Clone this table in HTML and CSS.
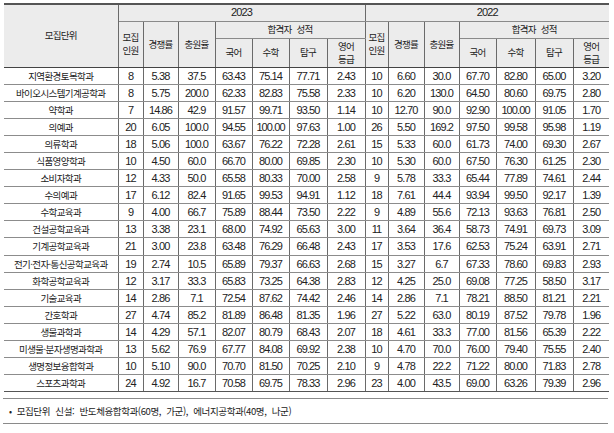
FILE: index.html
```html
<!DOCTYPE html>
<html lang="ko">
<head>
<meta charset="utf-8">
<title>모집단위별 입시결과</title>
<link rel="stylesheet" href="styles.css">
</head>
<body>
<table class="result">
  <colgroup>
    <col class="c-unit">
    <col class="c-n"><col class="c-rate"><col class="c-fill"><col class="c-s1"><col class="c-s2"><col class="c-s3"><col class="c-s4">
    <col class="c-n2"><col class="c-rate2"><col class="c-fill2"><col class="c-t1"><col class="c-t2"><col class="c-t3"><col class="c-t4">
  </colgroup>
  <thead>
    <tr class="h1">
      <th rowspan="3" class="kr">모집단위</th>
      <th colspan="7" class="num yr">2023</th>
      <th colspan="7" class="num yr">2022</th>
    </tr>
    <tr class="h2">
      <th rowspan="2" class="kr">모집<br>인원</th>
      <th rowspan="2" class="kr">경쟁률</th>
      <th rowspan="2" class="kr">충원율</th>
      <th colspan="4" class="kr">합격자 성적</th>
      <th rowspan="2" class="kr">모집<br>인원</th>
      <th rowspan="2" class="kr">경쟁률</th>
      <th rowspan="2" class="kr">충원율</th>
      <th colspan="4" class="kr">합격자 성적</th>
    </tr>
    <tr class="h3">
      <th class="kr">국어</th><th class="kr">수학</th><th class="kr">탐구</th><th class="kr">영어<br>등급</th>
      <th class="kr">국어</th><th class="kr">수학</th><th class="kr">탐구</th><th class="kr">영어<br>등급</th>
    </tr>
  </thead>
  <tbody>
    <tr><td class="kr">지역환경토목학과</td><td>8</td><td>5.38</td><td>37.5</td><td>63.43</td><td>75.14</td><td>77.71</td><td>2.43</td><td>10</td><td>6.60</td><td>30.0</td><td>67.70</td><td>82.80</td><td>65.00</td><td>3.20</td></tr>
    <tr><td class="kr">바이오시스템기계공학과</td><td>8</td><td>5.75</td><td>200.0</td><td>62.33</td><td>82.83</td><td>75.58</td><td>2.33</td><td>10</td><td>6.20</td><td>130.0</td><td>64.50</td><td>80.60</td><td>69.75</td><td>2.80</td></tr>
    <tr><td class="kr">약학과</td><td>7</td><td>14.86</td><td>42.9</td><td>91.57</td><td>99.71</td><td>93.50</td><td>1.14</td><td>10</td><td>12.70</td><td>90.0</td><td>92.90</td><td>100.00</td><td>91.05</td><td>1.70</td></tr>
    <tr><td class="kr">의예과</td><td>20</td><td>6.05</td><td>100.0</td><td>94.55</td><td>100.00</td><td>97.63</td><td>1.00</td><td>26</td><td>5.50</td><td>169.2</td><td>97.50</td><td>99.58</td><td>95.98</td><td>1.19</td></tr>
    <tr><td class="kr">의류학과</td><td>18</td><td>5.06</td><td>100.0</td><td>63.67</td><td>76.22</td><td>72.28</td><td>2.61</td><td>15</td><td>5.33</td><td>60.0</td><td>61.73</td><td>74.00</td><td>69.30</td><td>2.67</td></tr>
    <tr><td class="kr">식품영양학과</td><td>10</td><td>4.50</td><td>60.0</td><td>66.70</td><td>80.00</td><td>69.85</td><td>2.30</td><td>10</td><td>5.30</td><td>60.0</td><td>67.50</td><td>76.30</td><td>61.25</td><td>2.30</td></tr>
    <tr><td class="kr">소비자학과</td><td>12</td><td>4.33</td><td>50.0</td><td>65.58</td><td>80.33</td><td>70.00</td><td>2.58</td><td>9</td><td>5.78</td><td>33.3</td><td>65.44</td><td>77.89</td><td>74.61</td><td>2.44</td></tr>
    <tr><td class="kr">수의예과</td><td>17</td><td>6.12</td><td>82.4</td><td>91.65</td><td>99.53</td><td>94.91</td><td>1.12</td><td>18</td><td>7.61</td><td>44.4</td><td>93.94</td><td>99.50</td><td>92.17</td><td>1.39</td></tr>
    <tr><td class="kr">수학교육과</td><td>9</td><td>4.00</td><td>66.7</td><td>75.89</td><td>88.44</td><td>73.50</td><td>2.22</td><td>9</td><td>4.89</td><td>55.6</td><td>72.13</td><td>93.63</td><td>76.81</td><td>2.50</td></tr>
    <tr><td class="kr">건설공학교육과</td><td>13</td><td>3.38</td><td>23.1</td><td>68.00</td><td>74.92</td><td>65.63</td><td>3.00</td><td>11</td><td>3.64</td><td>36.4</td><td>58.73</td><td>74.91</td><td>69.73</td><td>3.09</td></tr>
    <tr><td class="kr">기계공학교육과</td><td>21</td><td>3.00</td><td>23.8</td><td>63.48</td><td>76.29</td><td>66.48</td><td>2.43</td><td>17</td><td>3.53</td><td>17.6</td><td>62.53</td><td>75.24</td><td>63.91</td><td>2.71</td></tr>
    <tr><td class="kr">전기·전자·통신공학교육과</td><td>19</td><td>2.74</td><td>10.5</td><td>65.89</td><td>79.37</td><td>66.63</td><td>2.68</td><td>15</td><td>3.27</td><td>6.7</td><td>67.33</td><td>78.60</td><td>69.83</td><td>2.93</td></tr>
    <tr><td class="kr">화학공학교육과</td><td>12</td><td>3.17</td><td>33.3</td><td>65.83</td><td>73.25</td><td>64.38</td><td>2.83</td><td>12</td><td>4.25</td><td>25.0</td><td>69.08</td><td>77.25</td><td>58.50</td><td>3.17</td></tr>
    <tr><td class="kr">기술교육과</td><td>14</td><td>2.86</td><td>7.1</td><td>72.54</td><td>87.62</td><td>74.42</td><td>2.46</td><td>14</td><td>2.86</td><td>7.1</td><td>78.21</td><td>88.50</td><td>81.21</td><td>2.21</td></tr>
    <tr><td class="kr">간호학과</td><td>27</td><td>4.74</td><td>85.2</td><td>81.89</td><td>86.48</td><td>81.35</td><td>1.96</td><td>27</td><td>5.22</td><td>63.0</td><td>80.19</td><td>87.52</td><td>79.78</td><td>1.96</td></tr>
    <tr><td class="kr">생물과학과</td><td>14</td><td>4.29</td><td>57.1</td><td>82.07</td><td>80.79</td><td>68.43</td><td>2.07</td><td>18</td><td>4.61</td><td>33.3</td><td>77.00</td><td>81.56</td><td>65.39</td><td>2.22</td></tr>
    <tr><td class="kr">미생물·분자생명과학과</td><td>13</td><td>5.62</td><td>76.9</td><td>67.77</td><td>84.08</td><td>69.92</td><td>2.38</td><td>10</td><td>4.70</td><td>70.0</td><td>76.00</td><td>79.40</td><td>75.55</td><td>2.40</td></tr>
    <tr><td class="kr">생명정보융합학과</td><td>10</td><td>5.10</td><td>90.0</td><td>70.70</td><td>81.50</td><td>70.25</td><td>2.10</td><td>9</td><td>4.78</td><td>22.2</td><td>71.22</td><td>80.00</td><td>71.83</td><td>2.78</td></tr>
    <tr><td class="kr">스포츠과학과</td><td>24</td><td>4.92</td><td>16.7</td><td>70.58</td><td>69.75</td><td>78.33</td><td>2.96</td><td>23</td><td>4.00</td><td>43.5</td><td>69.00</td><td>63.26</td><td>79.39</td><td>2.96</td></tr>
  </tbody>
</table>
<div class="note">
  <span class="bullet">•</span><span class="note-text">모집단위 신설: 반도체융합학과(60명, 가군), 에너지공학과(40명, 나군)</span>
</div>
</body>
</html>
```

FILE: styles.css
```css
html, body {
  margin: 0;
  padding: 0;
  background: #ffffff;
}

body {
  padding: 3px 5px 0 4px;
  color: #222222;
  font-family: "Liberation Sans", Arial, sans-serif;
}

.result {
  width: 605px;
  border-collapse: collapse;
  table-layout: fixed;
  border-top: 2px solid #555555;
  border-bottom: 1px solid #555555;
}

.c-unit { width: 114px; }
.c-n { width: 25px; }
.c-rate { width: 35px; }
.c-fill { width: 37px; }
.c-s1 { width: 37px; }
.c-s2 { width: 37px; }
.c-s3 { width: 38px; }
.c-s4 { width: 38px; }
.c-n2 { width: 23px; }
.c-rate2 { width: 36px; }
.c-fill2 { width: 35px; }
.c-t1 { width: 37px; }
.c-t2 { width: 39px; }
.c-t3 { width: 38px; }
.c-t4 { width: 36px; }

.result th,
.result td {
  padding: 0;
  text-align: center;
  vertical-align: middle;
  border-left: 1px solid #6a6a6a;
  border-right: 1px solid #6a6a6a;
  white-space: nowrap;
  overflow: hidden;
}

.result th:first-child,
.result td:first-child {
  border-left: none;
}

.result tr > :last-child {
  border-right: none;
}

.result thead th {
  background: #ececec;
  font-weight: normal;
  border-bottom: 1px solid #8a8a8a;
  line-height: 13px;
}

.result thead tr.h1 th:first-child {
  border-bottom: 1.5px solid #444444;
}

.result thead tr.h2 th[rowspan],
.result thead tr.h3 th {
  border-bottom: 1.5px solid #444444;
}

.result thead tr.h1 { height: 17px; }
.result thead tr.h2 { height: 17px; }
.result thead tr.h3 { height: 29px; }

.result tbody tr { height: 17.1px; }

.result tbody td {
  border-bottom: 1px solid #8c8c8c;
  font-size: 11px;
  letter-spacing: -0.9px;
  line-height: 12px;
}

.result tbody tr:last-child td {
  border-bottom: 1px solid #555555;
}

.kr {
  font-family: "Noto Sans CJK KR", "Noto Sans", sans-serif;
  font-size: 9.5px;
  letter-spacing: -0.7px;
  word-spacing: 3px;
}

.result tbody td.kr {
  font-size: 9.5px;
  letter-spacing: -0.6px;
}

.num {
  font-size: 11px;
  letter-spacing: -0.9px;
}

.note {
  margin-top: 6px;
  width: 605px;
  margin-left: -1px;
  height: 24px;
  border-top: 1.5px solid #8a8a8a;
  border-bottom: 1.5px solid #8a8a8a;
  display: flex;
  align-items: center;
  font-family: "Noto Sans CJK KR", "Noto Sans", sans-serif;
  font-size: 9.5px;
  letter-spacing: -0.4px;
  word-spacing: 3px;
  color: #222222;
}

.bullet {
  margin-left: 6px;
  margin-right: 5px;
  font-size: 9px;
}
```
